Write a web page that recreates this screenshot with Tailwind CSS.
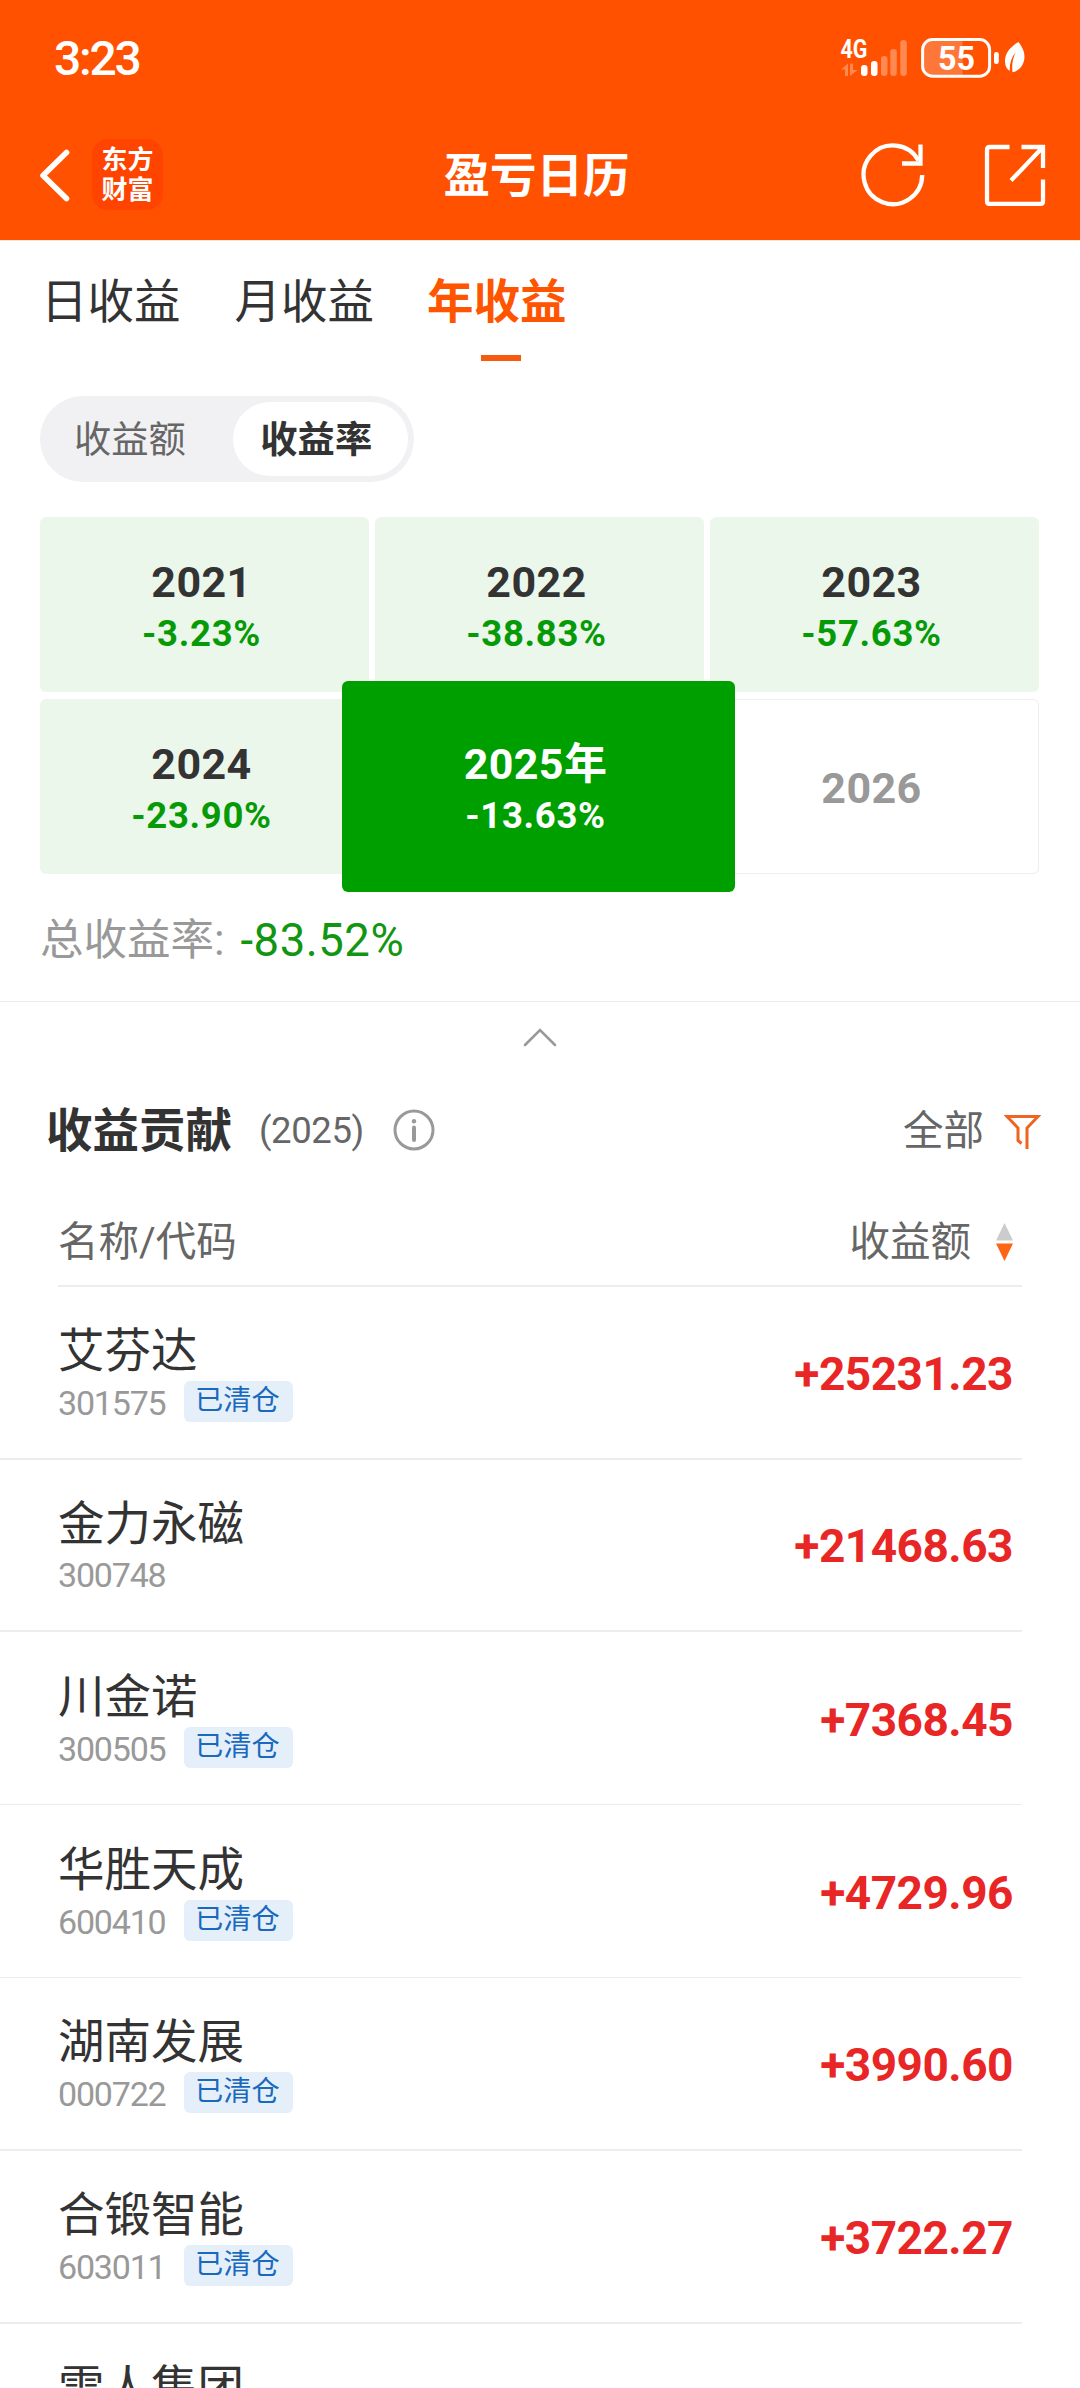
<!DOCTYPE html>
<html lang="zh-CN">
  <head>
    <meta charset="UTF-8" />
    <meta name="viewport" content="width=device-width, initial-scale=1.0" />
    <title>盈亏日历</title>
    <script src="https://cdn.jsdelivr.net/npm/@tailwindcss/browser@4"></script>
  </head>
  <body class="w-[1080px] h-[2388px] overflow-hidden bg-white text-[#333] font-['Roboto','Noto_Sans_CJK_SC',sans-serif]">
    <header class="h-[241px] bg-[#ff5100] text-white border-b border-[#ffe9d3]">
      <!-- 状态栏 -->
      <div class="h-[116px] flex items-center justify-between pl-[54px] pr-[52px]">
        <span class="text-[48px] leading-none font-medium tracking-[-2.2px] pt-0.5">3:23</span>
        <svg class="w-[188px] h-[44px]" viewBox="840 35 188 44" fill="#fff">
          <text x="840.5" y="57" font-size="25" font-weight="700" textLength="27" lengthAdjust="spacingAndGlyphs">4G</text>
          <g opacity="0.32">
            <path d="M841 68.5 L848 62.5 V75 H845 V68.5 Z" />
            <path d="M850 62.5 H853 V69 H857.5 L850 75 Z" />
            <rect x="881" y="55" width="6.5" height="20" rx="3.2" />
            <rect x="890.3" y="48" width="6.5" height="27" rx="3.2" />
            <rect x="900.3" y="39" width="6.5" height="36" rx="3.2" />
          </g>
          <rect x="861" y="64" width="6.5" height="11" rx="3" />
          <rect x="871" y="60" width="6.5" height="15" rx="3" />
          <path d="M933 38.5 H962.5 V75 H933 Q923 75 923 65 V48.5 Q923 38.5 933 38.5 Z" opacity="0.22" />
          <rect x="922.6" y="38.6" width="67" height="36.6" rx="10" fill="none" stroke="#fff" stroke-width="3" />
          <text x="938" y="69" font-size="34" font-weight="700" textLength="37" lengthAdjust="spacingAndGlyphs">55</text>
          <rect x="994" y="51" width="4.8" height="12" rx="2.2" />
          <path d="M1018.5 41 C1010 46 1004.5 53 1005 61 C1005.2 65 1007 68.5 1009.8 70 C1009.5 63 1011 57 1015.5 51.5 C1012.5 58 1011.7 64 1012.5 71.3 C1019 70 1024.5 64 1024.5 55.5 C1024.5 50 1022 45.5 1018.5 41 Z" />
        </svg>
      </div>
      <!-- 导航栏 -->
      <div class="h-[117px] flex items-center justify-between pl-[38px] pr-[34px]">
        <div class="w-[177px] flex items-center">
          <svg class="w-[34px] h-[54px]" viewBox="0 0 34 54" fill="none" stroke="#fff" stroke-width="5.6" stroke-linecap="round" stroke-linejoin="round">
            <path d="M28.5 4.5 L5 27.5 L28.5 50.5" />
          </svg>
          <div class="ml-5 w-[71px] h-[71px] rounded-2xl bg-[#ff4400] flex flex-col items-center justify-center text-[26px] leading-[30px] font-bold">
            <span>东方</span>
            <span>财富</span>
          </div>
        </div>
        <h1 class="pt-1 text-[46.5px] font-bold leading-none">盈亏日历</h1>
        <div class="w-[188px] flex justify-end items-center gap-[58px]">
          <svg class="w-[66px] h-[66px]" viewBox="0 0 66 66" fill="none" stroke="#fff" stroke-width="4.3">
            <path d="M62.2 33 A29.3 29.3 0 1 1 58.5 18.5" />
            <path d="M60.5 2.5 V21.5 H42" />
          </svg>
          <svg class="w-[62px] h-[62px]" viewBox="0 0 62 62" fill="none" stroke="#fff" stroke-width="4.3">
            <path d="M25.5 3 H6 Q3 3 3 6 V57 Q3 60 6 60 H56 Q59 60 59 57 V35.5" />
            <path d="M37.5 3 H59 V24 M59 3 L27 36.5" />
          </svg>
        </div>
      </div>
    </header>

    <!-- 日 / 月 / 年 -->
    <nav class="h-[120px] flex gap-[54px] pl-[41px] pt-[37px] text-[46.5px] leading-[48px]">
      <span>日收益</span>
      <span>月收益</span>
      <span class="-ml-px flex flex-col items-center font-bold text-[#ff5500]">
        年收益
        <i class="mt-[29px] ml-[9px] w-10 h-1.5 bg-[#f55a0f]"></i>
      </span>
    </nav>

    <div class="ml-10 mt-[35px] w-[374px] h-[86px] rounded-full bg-[#f1f1f4] flex items-center justify-end p-1.5 text-[37.3px] leading-none">
      <span class="w-[187px] pl-[28px] pt-[3px] text-[#666]">收益额</span>
      <span class="w-[176px] h-[74px] rounded-full bg-white flex items-center justify-center pr-[8px] pt-[3px] font-bold">收益率</span>
    </div>

    <!-- 年度收益率 -->
    <section class="mx-10 mt-[35px] w-[999px] grid grid-cols-3 grid-rows-[175px_175px] gap-x-1.5 gap-y-[7px] font-bold text-[43px] leading-[50px] tracking-[0.4px]">
      <div class="rounded-md bg-[#ecf7ec] flex flex-col items-center pt-10 pr-1.5">
        <span>2021</span>
        <span class="mt-0.5 text-[36.5px] tracking-[0.7px] text-[#079a07]">-3.23%</span>
      </div>
      <div class="rounded-md bg-[#ecf7ec] flex flex-col items-center pt-10 pr-1.5">
        <span>2022</span>
        <span class="mt-0.5 text-[36.5px] tracking-[0.7px] text-[#079a07]">-38.83%</span>
      </div>
      <div class="rounded-md bg-[#ecf7ec] flex flex-col items-center pt-10 pr-1.5">
        <span>2023</span>
        <span class="mt-0.5 text-[36.5px] tracking-[0.7px] text-[#079a07]">-57.63%</span>
      </div>
      <div class="rounded-md bg-[#ecf7ec] flex flex-col items-center pt-10 pr-1.5">
        <span>2024</span>
        <span class="mt-0.5 text-[36.5px] tracking-[0.7px] text-[#079a07]">-23.90%</span>
      </div>
      <div class="z-10 -ml-[33px] -mr-[31px] -my-[18px] rounded-md bg-[#009f00] text-white flex flex-col items-center pt-[58px] pr-1.5">
        <span>2025年</span>
        <span class="mt-0.5 text-[36.5px] tracking-[0.7px]">-13.63%</span>
      </div>
      <div class="rounded-md border border-[#eee] text-[#999] flex items-center justify-center pr-1.5 pt-0.5">
        <span>2026</span>
      </div>
    </section>

    <div class="h-[128px] border-b border-[#ebebeb] flex pl-10 pt-[41px] leading-[52px]">
      <span class="text-[43.5px] text-[#999]">总收益率:</span>
      <span class="ml-[16px] text-[45.5px] tracking-[0.5px] text-[#129612]">-83.52%</span>
    </div>

    <div class="h-[68px] flex justify-center pt-[25px]">
      <svg class="w-9 h-[22px]" viewBox="0 0 36 22" fill="none" stroke="#999" stroke-width="2.6" stroke-linecap="round">
        <path d="M3 18 L18 3 L33 18" />
      </svg>
    </div>

    <!-- 收益贡献 -->
    <div class="h-[120px] flex items-center pl-[46px] pr-[39px] leading-none">
      <h2 class="pt-0.5 text-[46.5px] font-bold">收益贡献</h2>
      <span class="ml-[27px] pt-0.5 text-[36.5px] tracking-[-0.4px] text-[#666]">(2025)</span>
      <svg class="ml-[29px] w-[42px] h-[42px]" viewBox="0 0 42 42" fill="none" stroke="#999" stroke-width="3">
        <circle cx="21" cy="21" r="19" />
        <path d="M21 18.5 V31" stroke-width="4" stroke-linecap="round" />
        <circle cx="21" cy="12.3" r="2.2" fill="#999" stroke="none" />
      </svg>
      <span class="ml-auto pt-0.5 text-[40.5px] text-[#666]">全部</span>
      <svg class="mt-1 ml-5 w-[37px] h-[36px]" viewBox="0 0 37 36" fill="none" stroke="#ee6420" stroke-width="3">
        <path d="M17.5 29.5 L14 26.5 V14 L3 2.5 H34 L23 14 V35" />
      </svg>
    </div>

    <div class="ml-[58px] w-[964px] h-[96.8px] border-b-2 border-[#ededed] flex items-center pt-[10px] pr-[9px] text-[40.5px] leading-none text-[#666]">
      <span>名称/代码</span>
      <span class="ml-auto">收益额</span>
      <svg class="ml-[25px] w-[17px] h-[38px]" viewBox="0 0 17 38">
        <path d="M8.5 0 L17 17.5 H0 Z" fill="#ccc" />
        <path d="M8.5 38 L17 20.5 H0 Z" fill="#ff6414" />
      </svg>
    </div>

    <!-- 个股列表 -->
    <ul class="w-[1022px]">
      <li class="h-[172.8px] border-b-2 border-[#ededed] flex items-center justify-between pl-[58px] pr-[9px] pt-0.5">
        <div>
          <div class="text-[46.5px] leading-[54px]">艾芬达</div>
          <div class="h-[41px] mt-[3px] flex items-center gap-[18px]">
            <span class="pt-0.5 w-[108px] text-[34px] leading-none tracking-[-1.2px] text-[#999]">301575</span>
            <span class="w-[109px] h-[41px] rounded-md bg-[#e4effa] text-[#1a69bd] text-[28.2px] leading-[39px] pl-[11px]">已清仓</span>
          </div>
        </div>
        <span class="pt-0.5 text-[46px] font-bold tracking-[-0.5px] text-[#e92626]">+25231.23</span>
      </li>
      <li class="h-[172.8px] border-b-2 border-[#ededed] flex items-center justify-between pl-[58px] pr-[9px] pt-0.5">
        <div>
          <div class="text-[46.5px] leading-[54px]">金力永磁</div>
          <div class="h-[41px] mt-[3px] flex items-center gap-[18px]">
            <span class="pt-0.5 w-[108px] text-[34px] leading-none tracking-[-1.2px] text-[#999]">300748</span>
          </div>
        </div>
        <span class="pt-0.5 text-[46px] font-bold tracking-[-0.5px] text-[#e92626]">+21468.63</span>
      </li>
      <li class="h-[172.8px] border-b border-[#ededed] flex items-center justify-between pl-[58px] pr-[9px] pt-0.5">
        <div>
          <div class="text-[46.5px] leading-[54px]">川金诺</div>
          <div class="h-[41px] mt-[3px] flex items-center gap-[18px]">
            <span class="pt-0.5 w-[108px] text-[34px] leading-none tracking-[-1.2px] text-[#999]">300505</span>
            <span class="w-[109px] h-[41px] rounded-md bg-[#e4effa] text-[#1a69bd] text-[28.2px] leading-[39px] pl-[11px]">已清仓</span>
          </div>
        </div>
        <span class="pt-0.5 text-[46px] font-bold tracking-[-0.5px] text-[#e92626]">+7368.45</span>
      </li>
      <li class="h-[172.8px] border-b border-[#ededed] flex items-center justify-between pl-[58px] pr-[9px] pt-0.5">
        <div>
          <div class="text-[46.5px] leading-[54px]">华胜天成</div>
          <div class="h-[41px] mt-[3px] flex items-center gap-[18px]">
            <span class="pt-0.5 w-[108px] text-[34px] leading-none tracking-[-1.2px] text-[#999]">600410</span>
            <span class="w-[109px] h-[41px] rounded-md bg-[#e4effa] text-[#1a69bd] text-[28.2px] leading-[39px] pl-[11px]">已清仓</span>
          </div>
        </div>
        <span class="pt-0.5 text-[46px] font-bold tracking-[-0.5px] text-[#e92626]">+4729.96</span>
      </li>
      <li class="h-[172.8px] border-b-2 border-[#ededed] flex items-center justify-between pl-[58px] pr-[9px] pt-0.5">
        <div>
          <div class="text-[46.5px] leading-[54px]">湖南发展</div>
          <div class="h-[41px] mt-[3px] flex items-center gap-[18px]">
            <span class="pt-0.5 w-[108px] text-[34px] leading-none tracking-[-1.2px] text-[#999]">000722</span>
            <span class="w-[109px] h-[41px] rounded-md bg-[#e4effa] text-[#1a69bd] text-[28.2px] leading-[39px] pl-[11px]">已清仓</span>
          </div>
        </div>
        <span class="pt-0.5 text-[46px] font-bold tracking-[-0.5px] text-[#e92626]">+3990.60</span>
      </li>
      <li class="h-[172.8px] border-b-2 border-[#ededed] flex items-center justify-between pl-[58px] pr-[9px] pt-0.5">
        <div>
          <div class="text-[46.5px] leading-[54px]">合锻智能</div>
          <div class="h-[41px] mt-[3px] flex items-center gap-[18px]">
            <span class="pt-0.5 w-[108px] text-[34px] leading-none tracking-[-1.2px] text-[#999]">603011</span>
            <span class="w-[109px] h-[41px] rounded-md bg-[#e4effa] text-[#1a69bd] text-[28.2px] leading-[39px] pl-[11px]">已清仓</span>
          </div>
        </div>
        <span class="pt-0.5 text-[46px] font-bold tracking-[-0.5px] text-[#e92626]">+3722.27</span>
      </li>
      <li class="pl-[58px] pt-[37px] text-[46.5px] leading-[54px]">雪人集团</li>
    </ul>
  </body>
</html>
